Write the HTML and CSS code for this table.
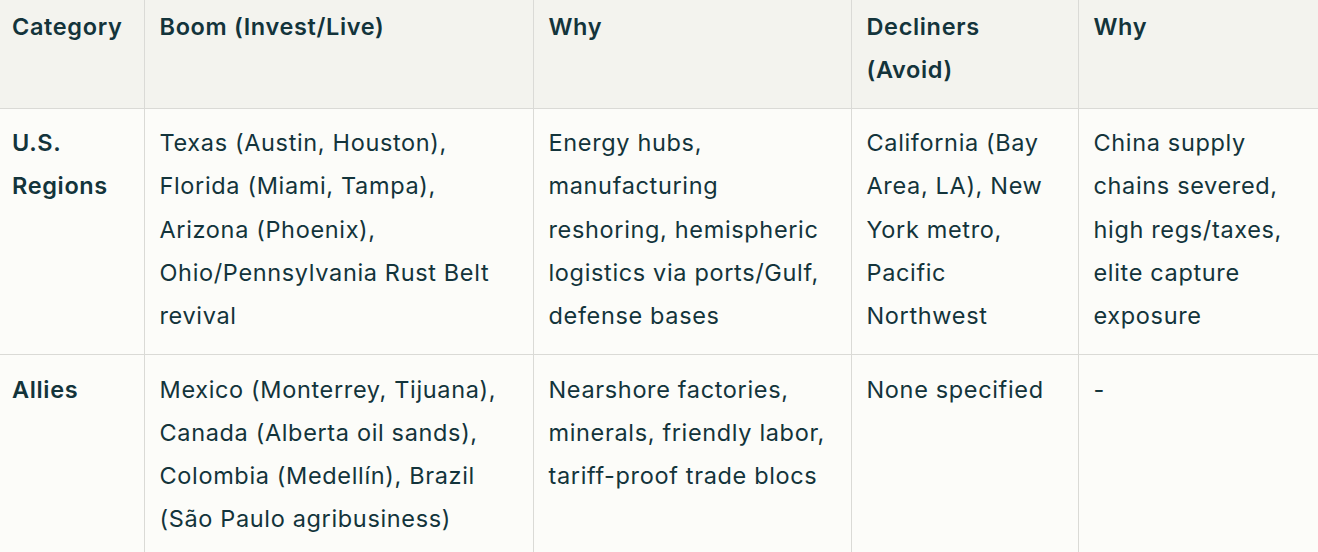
FILE: index.html
```html
<!DOCTYPE html>
<html>
<head>
<meta charset="utf-8">
<link rel="stylesheet" href="styles.css">
</head>
<body>
<table class="grid">
  <colgroup>
    <col class="c1"><col class="c2"><col class="c3"><col class="c4"><col class="c5">
  </colgroup>
  <thead>
    <tr>
      <th>Category</th>
      <th>Boom (Invest/Live)</th>
      <th>Why</th>
      <th>Decliners (Avoid)</th>
      <th>Why</th>
    </tr>
  </thead>
  <tbody>
    <tr>
      <td class="cat">U.S. Regions</td>
      <td>Texas (Austin, Houston), Florida (Miami, Tampa), Arizona (Phoenix), Ohio/Pennsylvania Rust Belt revival</td>
      <td>Energy hubs, manufacturing reshoring, hemispheric logistics via ports/Gulf, defense bases</td>
      <td>California (Bay Area, LA), New York metro, Pacific Northwest</td>
      <td>China supply chains severed, high regs/taxes, elite capture exposure</td>
    </tr>
    <tr>
      <td class="cat">Allies</td>
      <td>Mexico (Monterrey, Tijuana), Canada (Alberta oil sands), Colombia (Medellín), Brazil (São Paulo agribusiness)</td>
      <td>Nearshore factories, minerals, friendly labor, tariff-proof trade blocs</td>
      <td>None specified</td>
      <td>-</td>
    </tr>
  </tbody>
</table>
</body>
</html>
```

FILE: styles.css
```css
html, body {
  margin: 0;
  padding: 0;
  background: #fcfcf9;
}
body {
  font-family: Inter, "Liberation Sans", Arial, sans-serif;
  color: #13343b;
  font-size: 23.5px;
  line-height: 43.3px;
  letter-spacing: 0.65px;
}
.grid {
  width: 1318px;
  border-collapse: collapse;
  table-layout: fixed;
}
.c1 { width: 144px; }
.c2 { width: 389px; }
.c3 { width: 318px; }
.c4 { width: 227px; }
.c5 { width: 240px; }
th, td {
  text-align: left;
  vertical-align: top;
  border: 1px solid #dadad6;
  padding: 0 15px;
}
th:first-child, td:first-child { border-left: none; padding-left: 12px; }
th:last-child, td:last-child { border-right: none; }
thead tr { background: #f3f3ee; }
thead th {
  font-weight: 600;
  padding-top: 5px;
  padding-bottom: 16px;
  border-top: none;
}
tbody td {
  padding-top: 12.5px;
  padding-bottom: 16.5px;
}
td.cat { font-weight: 600; }
```
